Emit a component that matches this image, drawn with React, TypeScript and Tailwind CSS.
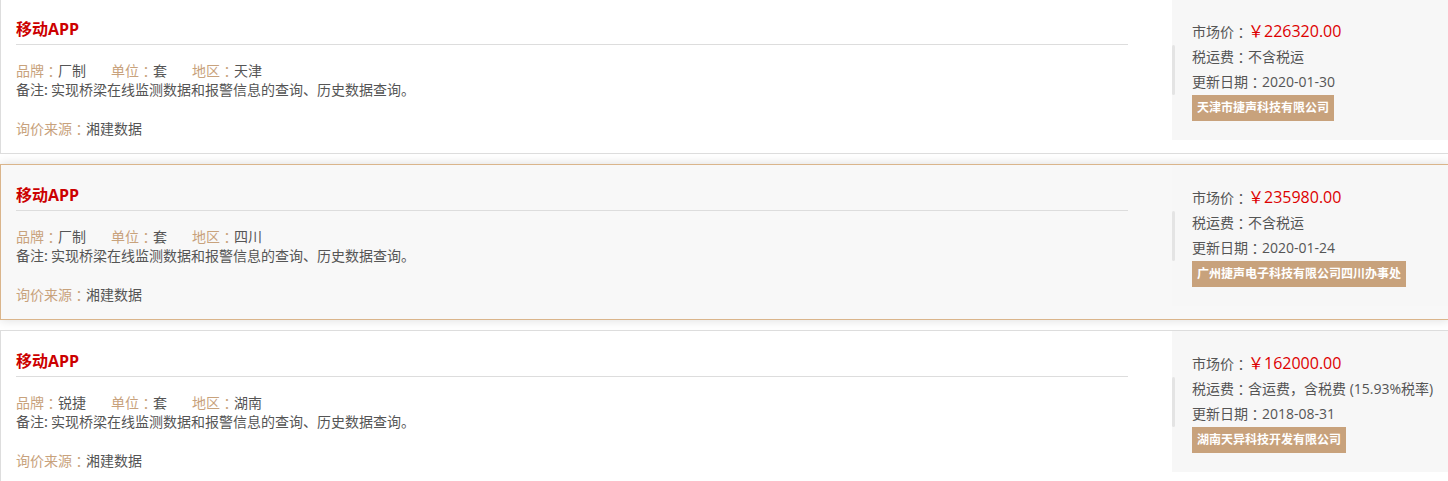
import React from "react";

interface Quote {
  id: number;
  brand: string;
  region: string;
  price: string;
  tax: string;
  date: string;
  company: string;
  active?: boolean;
}

const quotes: Quote[] = [
  { id: 1, brand: "厂制", region: "天津", price: "226320.00", tax: "不含税运", date: "2020-01-30", company: "天津市捷声科技有限公司" },
  { id: 2, brand: "厂制", region: "四川", price: "235980.00", tax: "不含税运", date: "2020-01-24", company: "广州捷声电子科技有限公司四川办事处", active: true },
  { id: 3, brand: "锐捷", region: "湖南", price: "162000.00", tax: "含运费，含税费 (15.93%税率)", date: "2018-08-31", company: "湖南天异科技开发有限公司" },
];

const font = "font-['Open_Sans','Noto_Sans_CJK_SC',sans-serif]";

export default function App() {
  return (
    <div lang="zh-CN" className={`w-full h-[481px] overflow-hidden bg-white ${font}`}>
      <div className="w-[1450px] -mt-[2px] flex flex-col gap-[10px]">
        {quotes.map((q) => (
          <QuoteCard key={q.id} q={q} />
        ))}
      </div>
    </div>
  );
}

// full-width colon set half-width, then centred in a full cell like the source font
function Colon() {
  return (
    <span className="inline-block w-[14px] text-center font-['Noto_Sans_CJK_SC',sans-serif] [font-feature-settings:'halt']">
      ：
    </span>
  );
}

function Label({ children }: { children: string }) {
  return (
    <span className="text-[#c8a27c]">
      {children}
      <Colon />
    </span>
  );
}

function QuoteCard({ q }: { q: Quote }) {
  return (
    <div
      className={
        "flex h-[156px] border " +
        (q.active
          ? "border-[#dab58b] bg-[#f8f8f8] shadow-[0_0_10px_rgba(0,0,0,0.14)]"
          : "border-[#dddddd] bg-white")
      }
    >
      {/* left: product info */}
      <div className="flex-1 pl-[15px] pr-[44px]">
        <div className="pt-[19px] pb-[4px] border-b border-[#dddddd]">
          <h2 className="text-[16px] leading-[22px] font-bold text-[#cc0000]">移动APP</h2>
        </div>
        <div className="mt-[16px] text-[14px] leading-[19px] text-[#555555]">
          <div className="flex">
            <span className="mr-[25px]">
              <Label>品牌</Label>
              {q.brand}
            </span>
            <span className="mr-[25px]">
              <Label>单位</Label>套
            </span>
            <span>
              <Label>地区</Label>
              {q.region}
            </span>
          </div>
          <p className="font-['Noto_Sans_CJK_SC',sans-serif]">备注: 实现桥梁在线监测数据和报警信息的查询、历史数据查询。</p>
          <p className="mt-[20px]">
            <Label>询价来源</Label>湘建数据
          </p>
        </div>
      </div>

      {/* right: price panel */}
      <div className="w-[277px] h-[141px] flex bg-[#f7f7f7]">
        <div className="w-[3px] h-[50px] mt-[46px] rounded-full bg-[#e4e4e4]" />
        <div className="pl-[17px] pt-[20px] text-[14px] text-[#555555]">
          <div className="h-[25px] leading-[25px]">
            <span className="inline-block w-[56px]">
              市场价<Colon />
            </span>
            <span className="text-[16px] text-[#dd0000]">￥{q.price}</span>
          </div>
          <div className="h-[25px] leading-[25px]">
            税运费<Colon />
            {q.tax}
          </div>
          <div className="h-[25px] leading-[25px]">
            更新日期<Colon />
            {q.date}
          </div>
          <span className="inline-block mt-[1px] h-[26px] leading-[26px] px-[5px] bg-[#c8a27c] text-white text-[12px] font-bold">
            {q.company}
          </span>
        </div>
      </div>
    </div>
  );
}
